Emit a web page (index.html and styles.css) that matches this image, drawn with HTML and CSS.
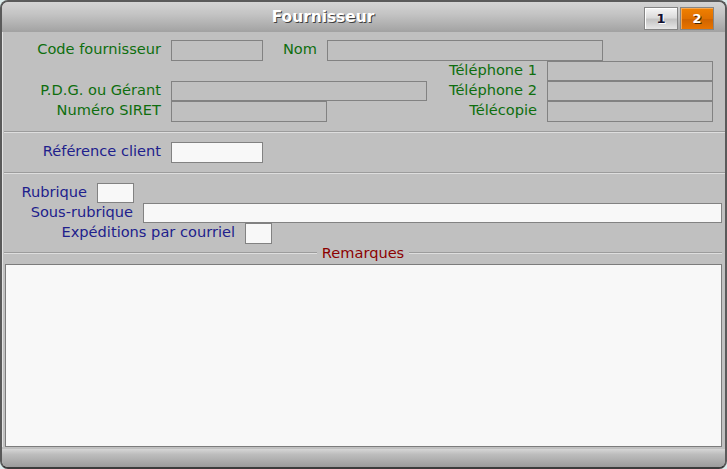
FILE: index.html
```html
<!DOCTYPE html>
<html lang="fr">
<head>
<meta charset="utf-8">
<title>Fournisseur</title>
<link rel="stylesheet" href="styles.css">
</head>
<body>
<div class="window">
  <div class="titlebar">
    <div class="title">Fournisseur</div>
    <div class="tabs">
      <div class="tab tab-off">1</div>
      <div class="tab tab-on">2</div>
    </div>
  </div>
  <div class="main">
    <div class="row h21">
      <div class="lbl green w-left">Code fournisseur</div>
      <div class="fld off w92"></div>
      <div class="lbl green w-nom">Nom</div>
      <div class="fld off w276"></div>
    </div>
    <div class="row h20">
      <div class="right">
        <div class="lbl green">Téléphone 1</div>
        <div class="fld off w166"></div>
      </div>
    </div>
    <div class="row h20">
      <div class="lbl green w-left">P.D.G. ou Gérant</div>
      <div class="fld off w256"></div>
      <div class="right">
        <div class="lbl green">Téléphone 2</div>
        <div class="fld off w166"></div>
      </div>
    </div>
    <div class="row h21">
      <div class="lbl green w-left">Numéro SIRET</div>
      <div class="fld off w156"></div>
      <div class="right">
        <div class="lbl green">Télécopie</div>
        <div class="fld off w166"></div>
      </div>
    </div>

    <div class="sep"></div>

    <div class="row h21">
      <div class="lbl blue w-left">Référence client</div>
      <div class="fld on w92"></div>
    </div>

    <div class="sep"></div>

    <div class="row h20">
      <div class="lbl blue w-rub">Rubrique</div>
      <div class="fld on w37"></div>
    </div>
    <div class="row h20">
      <div class="lbl blue w-srub">Sous-rubrique</div>
      <div class="fld on w579"></div>
    </div>
    <div class="row h21">
      <div class="lbl blue w-exp">Expéditions par courriel</div>
      <div class="fld on w27"></div>
    </div>

    <div class="legend">
      <div class="legend-line"></div>
      <div class="legend-text">Remarques</div>
      <div class="legend-line"></div>
    </div>
    <div class="memo"></div>
  </div>
  <div class="footer"></div>
</div>
</body>
</html>
```

FILE: styles.css
```css
html, body {
  margin: 0;
  padding: 0;
}
body {
  background: #dcecec;
  font-family: "DejaVu Sans", Verdana, sans-serif;
  font-size: 14.6px;
}
.window {
  width: 727px;
  height: 469px;
  box-sizing: border-box;
  border: 2px solid #5a5a5a;
  border-bottom-color: #3c3c3c;
  border-radius: 8px;
  background: #c0c0c0;
  display: flex;
  flex-direction: column;
  overflow: hidden;
  box-shadow: inset 1px 0 0 #e4e4e4;
}
.titlebar {
  height: 30px;
  flex: none;
  display: flex;
  align-items: flex-start;
  background: linear-gradient(#d4d4d4, #c4c4c4 40%, #a2a2a2);
}
.title {
  flex: 1;
  text-align: center;
  font-weight: bold;
  font-size: 15.4px;
  color: #ffffff;
  line-height: 30px;
  text-shadow: 1px 1px 0 #404040;
  padding-left: 0;
}
.tabs {
  display: flex;
  gap: 2px;
  margin-top: 5px;
  margin-right: 11px;
}
.tab {
  width: 34px;
  height: 23px;
  box-sizing: border-box;
  border: 1px solid #858585;
  font-weight: bold;
  font-size: 13px;
  line-height: 21px;
  text-align: center;
  box-shadow: inset 1px 1px 0 #ffffff;
}
.tab-off {
  background: linear-gradient(#f6f6f6, #dcdcdc 45%, #c4c4c4 55%, #e6e6e6);
  color: #101030;
  text-shadow: 1px 1px 0 #ffffff;
}
.tab-on {
  background: linear-gradient(#f08000, #e07000 50%, #d06400 55%, #e87400);
  color: #ffffff;
  text-shadow: 1px 1px 0 #4a2800;
  box-shadow: inset 1px 1px 0 #f8a850;
}
.main {
  flex: 1;
  display: flex;
  flex-direction: column;
  padding-top: 8px;
}
.row {
  display: flex;
  align-items: stretch;
  flex: none;
}
.h20 { height: 20px; }
.h21 { height: 21px; }
.lbl {
  white-space: nowrap;
  line-height: 20px;
  margin-top: -1px;
}
.green { color: #0e6e0e; }
.blue { color: #20208c; }
.w-left { width: 159px; text-align: right; }
.w-nom { width: 54px; text-align: right; }
.w-rub { width: 85px; text-align: right; }
.w-srub { width: 131px; text-align: right; }
.w-exp { width: 233px; text-align: right; }
.fld {
  box-sizing: border-box;
  border: 1px solid #828282;
  margin-left: 10px;
}
.fld.off { background: #c0c0c0; }
.fld.on { background: #f8f8f8; }
.w27 { width: 27px; }
.w37 { width: 37px; }
.w92 { width: 92px; }
.w156 { width: 156px; }
.w166 { width: 166px; }
.w256 { width: 256px; }
.w276 { width: 276px; }
.w579 { width: 579px; }
.right {
  margin-left: auto;
  margin-right: 12px;
  display: flex;
}
.sep {
  flex: none;
  height: 0;
  margin: 9px 0 9px 2px;
  border-top: 1px solid #9c9c9c;
  border-bottom: 1px solid #dedede;
}
.legend {
  flex: none;
  display: flex;
  align-items: center;
  height: 18px;
  margin: 0 3px 0 2px;
}
.legend-line {
  flex: 1;
  height: 0;
  border-top: 1px solid #9c9c9c;
  border-bottom: 1px solid #dedede;
}
.legend-text {
  color: #8c0000;
  padding: 0 5px;
  line-height: 18px;
  white-space: nowrap;
}
.memo {
  flex: 1;
  margin: 2px 3px 0 3px;
  box-sizing: border-box;
  border: 1px solid #7c7c7c;
  background: #f8f8f8;
}
.footer {
  flex: none;
  height: 20px;
  box-sizing: border-box;
  border-top: 2px solid #c0c0c0;
  background: linear-gradient(#d6d6d6, #bdbdbd 30%, #9c9c9c);
}
```
